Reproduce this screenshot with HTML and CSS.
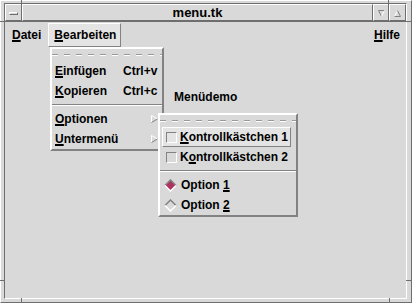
FILE: index.html
```html
<!DOCTYPE html>
<html>
<head>
<meta charset="utf-8">
<link rel="stylesheet" href="styles.css">
</head>
<body>
<div class="win">
  <div class="inner">
    <div class="titlebar">
      <div class="tb-btn tb-min"><span class="bar"></span></div>
      <div class="tb-btn tb-title">menu.tk</div>
      <div class="tb-btn tb-lower">
        <svg width="7" height="7" viewBox="0 0 7 7"><polyline points="0.5,0.5 6.5,0.5" stroke="#828282" fill="none"/><polyline points="0.5,0.5 3.5,6.5" stroke="#828282" fill="none"/><polyline points="6.5,0.5 3.5,6.5" stroke="#fff" fill="none"/></svg>
      </div>
      <div class="tb-btn tb-max">
        <svg width="7" height="7" viewBox="0 0 7 7"><polyline points="3.5,0.5 0.5,6.5" stroke="#fff" fill="none"/><polyline points="3.5,0.5 6.5,6.5 0.5,6.5" stroke="#828282" fill="none"/></svg>
      </div>
    </div>
    <div class="menubar">
      <div class="mb-item"><u>D</u>atei</div>
      <div class="mb-item active"><u>B</u>earbeiten</div>
      <div class="mb-spacer"></div>
      <div class="mb-item"><u>H</u>ilfe</div>
    </div>
    <div class="content">
      <div class="label">Menüdemo</div>
    </div>
  </div>
</div>

<span class="tick v" style="left:21px;top:0"></span>
<span class="tick v" style="left:388px;top:0"></span>
<span class="tick v" style="left:21px;top:298px"></span>
<span class="tick v" style="left:389px;top:298px"></span>
<span class="tick h" style="left:0;top:21px"></span>
<span class="tick h" style="left:406px;top:21px"></span>
<span class="tick h" style="left:0;top:280px"></span>
<span class="tick h" style="left:406px;top:280px"></span>

<div class="menu menu-edit">
  <div class="tearoff"></div>
  <div class="entry"><span class="lbl"><u>E</u>infügen</span><span class="accel">Ctrl+v</span></div>
  <div class="entry"><span class="lbl"><u>K</u>opieren</span><span class="accel">Ctrl+c</span></div>
  <div class="sep"></div>
  <div class="entry"><span class="lbl"><u>O</u>ptionen</span><svg class="arrow" width="7" height="8" viewBox="0 0 7 8"><polygon points="0.5,0.5 6.5,4 0.5,7.5" fill="#d9d9d9"/><polyline points="0.5,7.5 0.5,0.5 6.5,4" fill="none" stroke="#fff"/><polyline points="6.5,4 0.5,7.5" fill="none" stroke="#828282"/></svg></div>
  <div class="entry"><span class="lbl"><u>U</u>ntermenü</span><svg class="arrow" width="7" height="8" viewBox="0 0 7 8"><polygon points="0.5,0.5 6.5,4 0.5,7.5" fill="#d9d9d9"/><polyline points="0.5,7.5 0.5,0.5 6.5,4" fill="none" stroke="#fff"/><polyline points="6.5,4 0.5,7.5" fill="none" stroke="#828282"/></svg></div>
</div>

<div class="menu menu-opts">
  <div class="tearoff"></div>
  <div class="entry check-row active"><span class="check"></span><span><u>K</u>ontrollkästchen 1</span></div>
  <div class="entry check-row"><span class="check"></span><span>K<u>o</u>ntrollkästchen 2</span></div>
  <div class="sep"></div>
  <div class="entry radio-row"><svg class="radio" width="13" height="13" viewBox="0 0 13 13"><polygon points="6.5,1 12,6.5 6.5,12 1,6.5" fill="#b03060"/><polyline points="1,6.5 6.5,1 12,6.5" fill="none" stroke="#828282" stroke-width="1.5"/><polyline points="1,6.5 6.5,12 12,6.5" fill="none" stroke="#fff" stroke-width="1.5"/></svg><span>Option <u>1</u></span></div>
  <div class="entry radio-row"><svg class="radio" width="13" height="13" viewBox="0 0 13 13"><polyline points="1,6.5 6.5,1 12,6.5" fill="none" stroke="#828282" stroke-width="1.5"/><polyline points="1,6.5 6.5,12 12,6.5" fill="none" stroke="#fff" stroke-width="1.5"/></svg><span>Option <u>2</u></span></div>
</div>
</body>
</html>
```

FILE: styles.css
```css
* { box-sizing: border-box; margin: 0; padding: 0; }

html, body {
  width: 412px;
  height: 303px;
  overflow: hidden;
  background: #d9d9d9;
}

body {
  position: relative;
  font: bold 12px "Liberation Sans", Arial, sans-serif;
  color: #000;
}

u {
  text-decoration: underline;
  text-decoration-thickness: 2px;
  text-underline-offset: 1px;
}

.win {
  width: 412px;
  height: 303px;
  border: 1px solid;
  border-color: #fff #6e6e6e #6e6e6e #fff;
  padding: 2px 4px 3px 3px;
}

.inner {
  height: 100%;
  border: 1px solid;
  border-color: #6e6e6e #fff #fff #6e6e6e;
  display: flex;
  flex-direction: column;
}

.titlebar {
  display: flex;
  height: 18px;
  border-bottom: 1px solid #6e6e6e;
  flex: none;
}

.tb-btn {
  height: 17px;
  border: 1px solid;
  border-color: #fff #6e6e6e #6e6e6e #fff;
  display: flex;
  justify-content: center;
}

.tb-min {
  width: 17px;
  padding-top: 7px;
}

.tb-min .bar {
  width: 9px;
  height: 3px;
  border: 1px solid;
  border-color: #fff #6e6e6e #6e6e6e #fff;
}

.tb-title {
  flex: 1;
  font-size: 13px;
  line-height: 15px;
  align-items: center;
}

.tb-lower {
  width: 16px;
  padding-top: 5px;
}

.tb-max {
  width: 17px;
  padding-top: 5px;
}

.menubar {
  display: flex;
  gap: 2px;
  padding: 1px;
  height: 26px;
  flex: none;
}

.mb-item {
  border: 1px solid transparent;
  padding: 0 4px 0 5px;
  line-height: 22px;
}

.mb-item.active {
  background: #e4e4e4;
  border-color: #fff #828282 #828282 #fff;
}

.mb-spacer { flex: 1; }

.content { flex: 1; }

.label {
  margin: 41px 0 0 169px;
  line-height: 16px;
}

.tick {
  position: absolute;
  background: #6e6e6e;
}

.tick.v { width: 1px; height: 5px; }
.tick.h { width: 5px; height: 1px; }

.menu {
  position: absolute;
  background: #d9d9d9;
  border: 2px solid;
  border-color: #fff #828282 #828282 #fff;
}

.menu-edit { left: 50px; top: 47px; width: 114px; }
.menu-opts { left: 158px; top: 113px; width: 140px; }

.tearoff {
  height: 12px;
  background-image:
    repeating-linear-gradient(90deg, #999 0 6px, transparent 6px 12px),
    repeating-linear-gradient(90deg, #fff 0 6px, transparent 6px 12px);
  background-size: 100% 1px, 100% 1px;
  background-position: 0 5px, 0 6px;
  background-repeat: no-repeat;
}

.sep {
  height: 8px;
  background-image: linear-gradient(#828282, #828282), linear-gradient(#fff, #fff);
  background-size: 100% 1px, 100% 1px;
  background-position: 0 3px, 0 4px;
  background-repeat: no-repeat;
}

.entry {
  height: 20px;
  margin: 0 2px;
  border: 1px solid transparent;
  display: flex;
  align-items: center;
  line-height: 18px;
  white-space: nowrap;
}

.menu-opts .entry { margin: 0 5px 0 2px; }

.entry.active {
  background: #e4e4e4;
  border-color: #fff #828282 #828282 #fff;
}

.menu-edit .lbl { width: 68px; }

.arrow {
  margin-left: auto;
  margin-right: 1px;
}

.check-row { padding-left: 3px; }

.check {
  width: 11px;
  height: 11px;
  border: 1px solid;
  border-color: #828282 #fff #fff #828282;
  margin-right: 3px;
}

.radio-row { padding-left: 1px; }

.radio { margin-right: 4px; }
```
